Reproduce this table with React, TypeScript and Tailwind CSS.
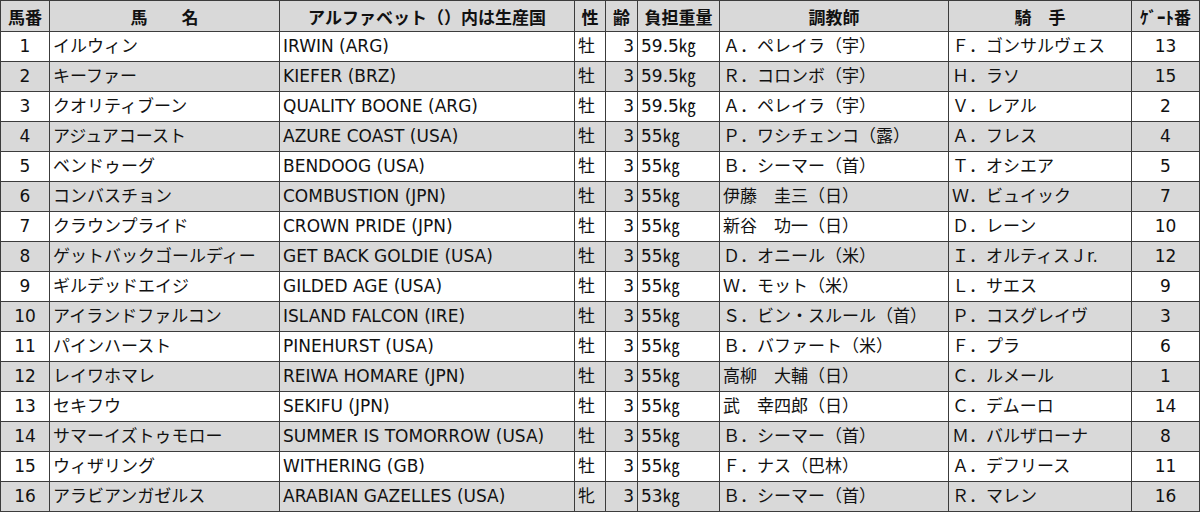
const rows = [
  ['1', 'イルウィン', 'IRWIN (ARG)', '牡', '3', '59.5㎏', 'Ａ．ペレイラ（宇）', 'Ｆ．ゴンサルヴェス', '13'],
  ['2', 'キーファー', 'KIEFER (BRZ)', '牡', '3', '59.5㎏', 'Ｒ．コロンボ（宇）', 'Ｈ．ラソ', '15'],
  ['3', 'クオリティブーン', 'QUALITY BOONE (ARG)', '牡', '3', '59.5㎏', 'Ａ．ペレイラ（宇）', 'Ｖ．レアル', '2'],
  ['4', 'アジュアコースト', 'AZURE COAST (USA)', '牡', '3', '55㎏', 'Ｐ．ワシチェンコ（露）', 'Ａ．フレス', '4'],
  ['5', 'ベンドゥーグ', 'BENDOOG (USA)', '牡', '3', '55㎏', 'Ｂ．シーマー（首）', 'Ｔ．オシエア', '5'],
  ['6', 'コンバスチョン', 'COMBUSTION (JPN)', '牡', '3', '55㎏', '伊藤　圭三（日）', 'Ｗ．ビュイック', '7'],
  ['7', 'クラウンプライド', 'CROWN PRIDE (JPN)', '牡', '3', '55㎏', '新谷　功一（日）', 'Ｄ．レーン', '10'],
  ['8', 'ゲットバックゴールディー', 'GET BACK GOLDIE (USA)', '牡', '3', '55㎏', 'Ｄ．オニール（米）', 'Ｉ．オルティスＪr.', '12'],
  ['9', 'ギルデッドエイジ', 'GILDED AGE (USA)', '牡', '3', '55㎏', 'Ｗ．モット（米）', 'Ｌ．サエス', '9'],
  ['10', 'アイランドファルコン', 'ISLAND FALCON (IRE)', '牡', '3', '55㎏', 'Ｓ．ビン・スルール（首）', 'Ｐ．コスグレイヴ', '3'],
  ['11', 'パインハースト', 'PINEHURST (USA)', '牡', '3', '55㎏', 'Ｂ．バファート（米）', 'Ｆ．プラ', '6'],
  ['12', 'レイワホマレ', 'REIWA HOMARE (JPN)', '牡', '3', '55㎏', '高柳　大輔（日）', 'Ｃ．ルメール', '1'],
  ['13', 'セキフウ', 'SEKIFU (JPN)', '牡', '3', '55㎏', '武　幸四郎（日）', 'Ｃ．デムーロ', '14'],
  ['14', 'サマーイズトゥモロー', 'SUMMER IS TOMORROW (USA)', '牡', '3', '55㎏', 'Ｂ．シーマー（首）', 'Ｍ．バルザローナ', '8'],
  ['15', 'ウィザリング', 'WITHERING (GB)', '牡', '3', '55㎏', 'Ｆ．ナス（巴林）', 'Ａ．デフリース', '11'],
  ['16', 'アラビアンガゼルス', 'ARABIAN GAZELLES (USA)', '牝', '3', '53㎏', 'Ｂ．シーマー（首）', 'Ｒ．マレン', '16'],
];

const widths = ['w-[49px]', 'w-[230px]', 'w-[295px]', 'w-[31px]', 'w-[32px]', 'w-[82px]', 'w-[229px]', 'w-[183px]', 'w-[68px]'];
const headers = ['馬番', '馬　　名', 'アルファベット（）内は生産国', '性', '齢', '負担重量', '調教師', '騎　手', 'ｹﾞｰﾄ番'];
const align = ['text-center', 'text-left', 'text-left', 'text-left', 'text-right', 'text-left', 'text-left', 'text-left', 'text-center'];

export default function App() {
  return (
    <div className="w-[1200px] h-[515px] bg-white text-[#111] font-['DejaVu_Sans','Noto_Sans_CJK_JP',sans-serif]">
      <table className="table-fixed border-collapse w-[1199px]">
        <colgroup>
          {widths.map((w, i) => (
            <col key={i} className={w} />
          ))}
        </colgroup>
        <thead>
          <tr className="h-[31px] bg-[#d9d9d9]">
            {headers.map((h, i) => (
              <th key={i} className="border border-[#3c3c3c] px-0 text-center text-[17px] font-bold leading-none whitespace-nowrap font-['Noto_Sans_CJK_JP',sans-serif]">
                {h}
              </th>
            ))}
          </tr>
        </thead>
        <tbody>
          {rows.map((r, ri) => (
            <tr key={ri} className={ri % 2 === 1 ? 'h-[30px] bg-[#d9d9d9]' : 'h-[30px] bg-white'}>
              {r.map((c, ci) => (
                <td key={ci} className={`border border-[#3c3c3c] px-[3px] text-[17px] leading-none whitespace-nowrap ${align[ci]}`}>
                  {c}
                </td>
              ))}
            </tr>
          ))}
        </tbody>
      </table>
    </div>
  );
}
